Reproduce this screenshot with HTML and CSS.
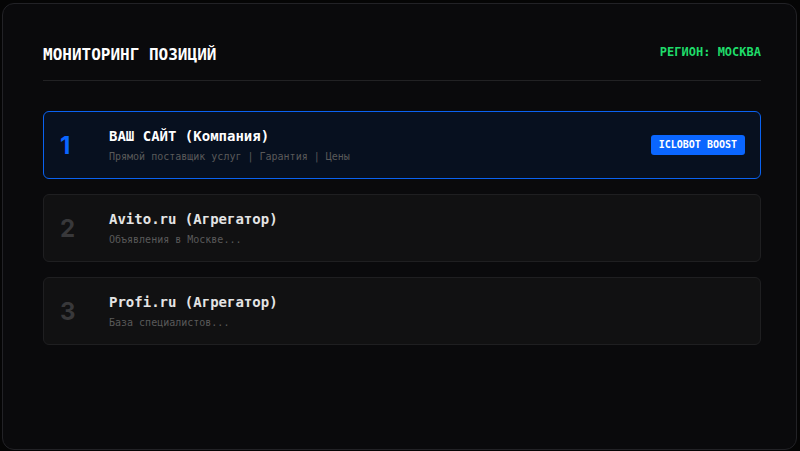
FILE: index.html
```html
<!DOCTYPE html>
<html lang="ru">
<head>
<meta charset="utf-8">
<link rel="stylesheet" href="styles.css">
</head>
<body>
<div class="panel">
  <div class="header">
    <h1 class="title">МОНИТОРИНГ ПОЗИЦИЙ</h1>
    <div class="region">РЕГИОН: МОСКВА</div>
  </div>
  <div class="list">
    <div class="row row-active">
      <div class="num">1</div>
      <div class="info">
        <div class="name">ВАШ САЙТ (Компания)</div>
        <div class="desc">Прямой поставщик услуг | Гарантия | Цены</div>
      </div>
      <div class="badge">ICLOBOT BOOST</div>
    </div>
    <div class="row">
      <div class="num">2</div>
      <div class="info">
        <div class="name">Avito.ru (Агрегатор)</div>
        <div class="desc">Объявления в Москве...</div>
      </div>
    </div>
    <div class="row">
      <div class="num">3</div>
      <div class="info">
        <div class="name">Profi.ru (Агрегатор)</div>
        <div class="desc">База специалистов...</div>
      </div>
    </div>
  </div>
</div>
</body>
</html>
```
FILE: styles.css
```css
html, body { height: 100%; }
body {
  margin: 0;
  padding: 3px 3px 1px 2px;
  box-sizing: border-box;
  background: #050505;
  font-family: "DejaVu Sans Mono", "Liberation Mono", monospace;
}
.panel {
  height: 100%;
  box-sizing: border-box;
  background: #0a0a0c;
  border: 1px solid #222226;
  border-radius: 12px;
  padding: 42px 35px 0 40px;
}
.header {
  display: flex;
  justify-content: space-between;
  align-items: flex-start;
  padding-bottom: 16px;
  border-bottom: 1px solid #222224;
}
.title {
  margin: 0;
  font-size: 16px;
  line-height: 18px;
  font-weight: 700;
  color: #ffffff;
}
.region {
  margin-top: -2px;
  font-size: 12px;
  font-weight: 700;
  color: #1fdc6a;
  line-height: 16px;
}
.list {
  margin-top: 30px;
  display: flex;
  flex-direction: column;
  gap: 15px;
}
.row {
  display: flex;
  align-items: center;
  height: 68px;
  box-sizing: border-box;
  padding: 0 15px 0 16px;
  background: #111112;
  border: 1px solid #1f1f21;
  border-radius: 6px;
}
.row-active {
  background: #07101f;
  border-color: #0a62f0;
}
.num {
  width: 49px;
  flex: none;
  font-family: Inter, "Liberation Sans", sans-serif;
  font-weight: 700;
  font-size: 24px;
  color: #38383a;
}
.row-active .num { color: #0a66ff; }
.info { flex: 1; display: flex; flex-direction: column; gap: 6px; }
.name {
  font-size: 14px;
  font-weight: 700;
  line-height: 17px;
  color: #e4e4e4;
}
.row-active .name { color: #ffffff; }
.desc {
  font-size: 10px;
  line-height: 12px;
  color: #5a5a5a;
}
.badge {
  background: #0a66ff;
  color: #ffffff;
  font-size: 10px;
  font-weight: 700;
  line-height: 12px;
  padding: 4px 8px;
  border-radius: 3px;
}
```
